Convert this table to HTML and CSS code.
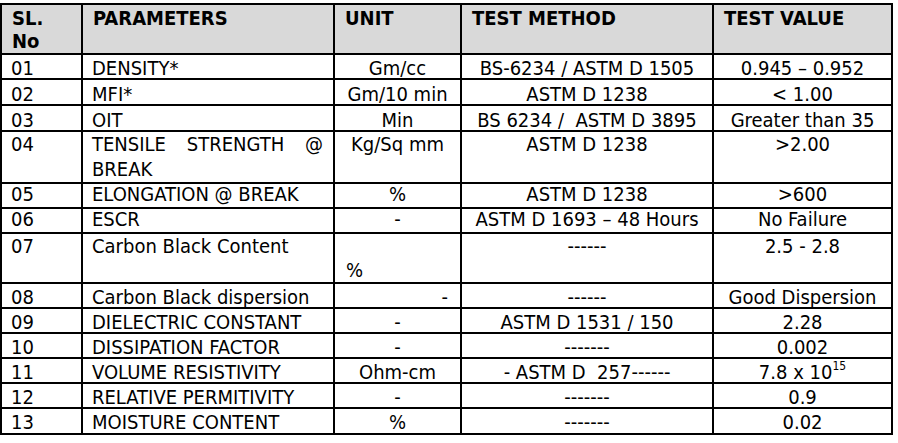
FILE: index.html
```html
<!DOCTYPE html>
<html>
<head>
<meta charset="utf-8">
<link rel="stylesheet" href="styles.css">
</head>
<body>
<table class="spec">
  <colgroup>
    <col class="c-sl"><col class="c-param"><col class="c-unit"><col class="c-method"><col class="c-value">
  </colgroup>
  <thead>
    <tr class="head">
      <th>SL.<br>No</th>
      <th>PARAMETERS</th>
      <th>UNIT</th>
      <th>TEST METHOD</th>
      <th>TEST VALUE</th>
    </tr>
  </thead>
  <tbody>
    <tr class="first"><td>01</td><td>DENSITY*</td><td class="ctr">Gm/cc</td><td class="ctr">BS-6234 / ASTM D 1505</td><td class="ctr">0.945 – 0.952</td></tr>
    <tr class="low r26"><td>02</td><td>MFI*</td><td class="ctr">Gm/10 min</td><td class="ctr">ASTM D 1238</td><td class="ctr">&lt; 1.00</td></tr>
    <tr class="low r26"><td>03</td><td>OIT</td><td class="ctr">Min</td><td class="ctr">BS 6234 /&nbsp; ASTM D 3895</td><td class="ctr">Greater than 35</td></tr>
    <tr class="tall"><td>04</td><td class="just">TENSILE STRENGTH @ BREAK</td><td class="ctr">Kg/Sq mm</td><td class="ctr">ASTM D 1238</td><td class="ctr">&gt;2.00</td></tr>
    <tr class="high"><td>05</td><td>ELONGATION @ BREAK</td><td class="ctr">%</td><td class="ctr">ASTM D 1238</td><td class="ctr">&gt;600</td></tr>
    <tr class="high"><td>06</td><td>ESCR</td><td class="ctr">-</td><td class="ctr">ASTM D 1693 – 48 Hours</td><td class="ctr">No Failure</td></tr>
    <tr class="two"><td>07</td><td>Carbon Black Content</td><td class="lowpct"><br>%</td><td class="ctr">------</td><td class="ctr">2.5 - 2.8</td></tr>
    <tr><td>08</td><td>Carbon Black dispersion</td><td class="rgt">-</td><td class="ctr">------</td><td class="ctr">Good Dispersion</td></tr>
    <tr><td>09</td><td>DIELECTRIC CONSTANT</td><td class="ctr">-</td><td class="ctr">ASTM D 1531 / 150</td><td class="ctr">2.28</td></tr>
    <tr><td>10</td><td>DISSIPATION FACTOR</td><td class="ctr">-</td><td class="ctr">-------</td><td class="ctr">0.002</td></tr>
    <tr><td>11</td><td>VOLUME RESISTIVITY</td><td class="ctr">Ohm-cm</td><td class="ctr">- ASTM D&nbsp; 257------</td><td class="ctr">7.8 x 10<sup>15</sup></td></tr>
    <tr><td>12</td><td>RELATIVE PERMITIVITY</td><td class="ctr">-</td><td class="ctr">-------</td><td class="ctr">0.9</td></tr>
    <tr class="r26"><td>13</td><td>MOISTURE CONTENT</td><td class="ctr">%</td><td class="ctr">-------</td><td class="ctr">0.02</td></tr>
  </tbody>
</table>
</body>
</html>
```

FILE: styles.css
```css
html, body {
  margin: 0;
  padding: 0;
  background: #ffffff;
}
body {
  padding-top: 3px;
  font-family: "DejaVu Sans Condensed", "DejaVu Sans", sans-serif;
  font-stretch: condensed;
  color: #000000;
}
.spec {
  border-collapse: collapse;
  table-layout: fixed;
  width: 893px;
  font-size: 20px;
}
.c-sl { width: 81px; }
.c-param { width: 252px; }
.c-unit { width: 127px; }
.c-method { width: 252px; }
.c-value { width: 179px; }

.spec th, .spec td {
  border: 2px solid #000000;
  vertical-align: top;
  text-align: left;
  white-space: nowrap;
}
.spec th {
  background: #d9d9d9;
  font-weight: bold;
  line-height: 23px;
  padding: 2px 10px 0 10px;
  box-sizing: border-box;
}
.head th { height: 50px; }
.spec td {
  line-height: 20px;
  padding: 3px 9px 0 9px;
  height: 25px;
  box-sizing: border-box;
}
.spec .first td {
  line-height: 19px;
  padding-top: 4px;
}
.spec .low td {
  line-height: 19px;
  padding-top: 5px;
}
.spec .r26 td { height: 26px; }
.spec .high td {
  line-height: 21px;
  padding-top: 0;
}
.spec .tall td {
  line-height: 25px;
  padding-top: 0;
  height: 52px;
}
.spec .two td {
  line-height: 24px;
  padding-top: 0;
  height: 50px;
}
.ctr { text-align: center !important; }
.rgt { text-align: right !important; padding-right: 12px !important; }
.lowpct { padding-left: 11px !important; }
.spec td.just {
  white-space: normal;
  text-align: justify;
  padding-right: 10px;
}
sup {
  font-size: 12px;
  line-height: 0;
  vertical-align: 9px;
}
```
